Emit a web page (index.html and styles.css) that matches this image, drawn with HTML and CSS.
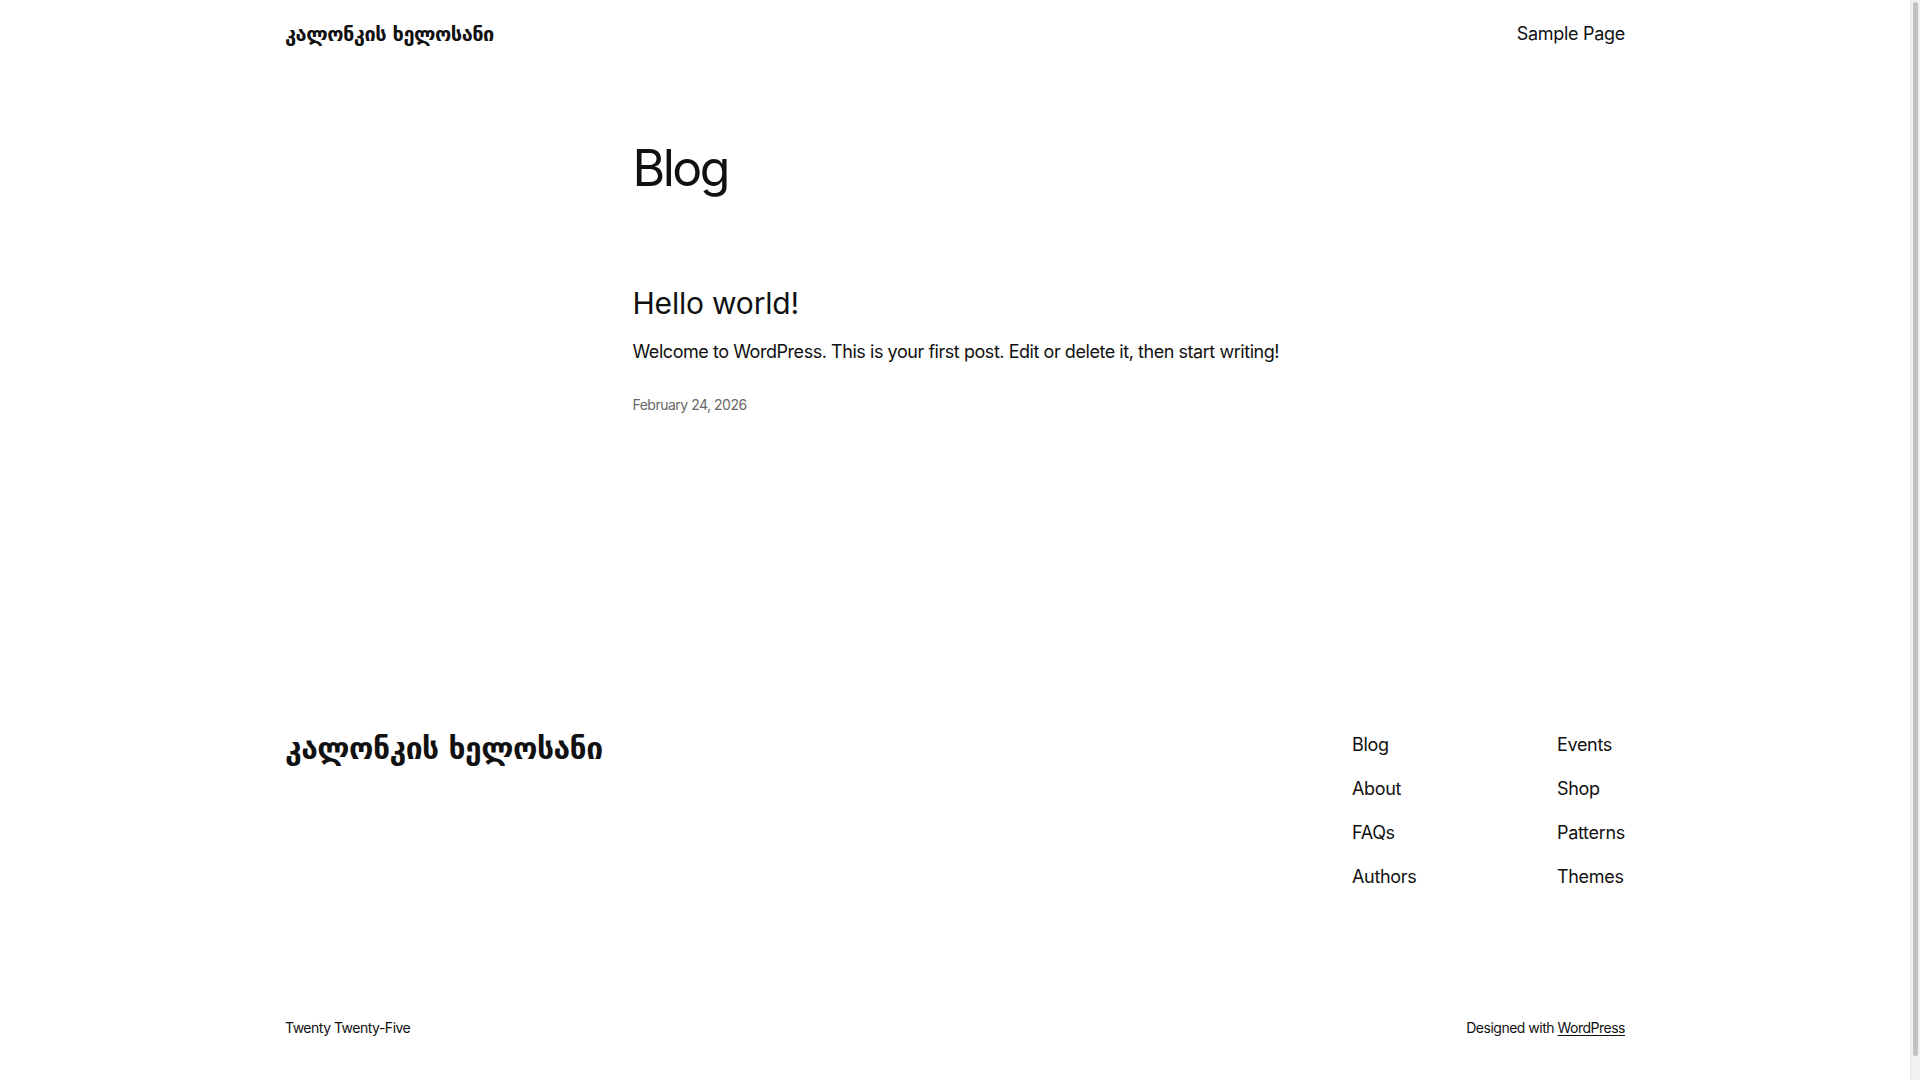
FILE: index.html
```html
<!DOCTYPE html>
<html lang="ka">
<head>
  <meta charset="UTF-8">
  <meta name="viewport" content="width=device-width, initial-scale=1.0">
  <title>Blog – კალონკის ხელოსანი</title>
  <link rel="stylesheet" href="styles.css">
</head>
<body>
  <header class="site-header">
    <div class="wrap header-row">
      <a class="site-title" href="#">კალონკის ხელოსანი</a>
      <nav class="header-nav">
        <a href="#">Sample Page</a>
      </nav>
    </div>
  </header>

  <main class="content">
    <h1 class="page-title">Blog</h1>
    <article class="post">
      <h2 class="post-title"><a href="#">Hello world!</a></h2>
      <p class="post-excerpt">Welcome to WordPress. This is your first post. Edit or delete it, then start writing!</p>
      <time class="post-date" datetime="2026-02-24">February 24, 2026</time>
    </article>
  </main>

  <footer class="site-footer">
    <div class="wrap footer-top">
      <a class="footer-title" href="#">კალონკის ხელოსანი</a>
      <nav class="footer-nav">
        <ul>
          <li><a href="#">Blog</a></li>
          <li><a href="#">About</a></li>
          <li><a href="#">FAQs</a></li>
          <li><a href="#">Authors</a></li>
        </ul>
        <ul>
          <li><a href="#">Events</a></li>
          <li><a href="#">Shop</a></li>
          <li><a href="#">Patterns</a></li>
          <li><a href="#">Themes</a></li>
        </ul>
      </nav>
    </div>
    <div class="wrap footer-bottom">
      <p>Twenty Twenty-Five</p>
      <p>Designed with <a href="#" class="underline">WordPress</a></p>
    </div>
  </footer>

  <div class="scrollbar"><span class="scrollbar-thumb"></span></div>
</body>
</html>
```

FILE: styles.css
```css
* {
  margin: 0;
  padding: 0;
  box-sizing: border-box;
}
body {
  font-family: Inter, "DejaVu Sans", sans-serif;
  font-size: 18px;
  line-height: 1.6;
  color: #111111;
  background: #ffffff;
  margin-right: 10px;
  padding-bottom: 30px;
}
a {
  color: inherit;
  text-decoration: none;
}
ul {
  list-style: none;
}
.wrap {
  max-width: 1340px;
  margin: 0 auto;
}

/* Header */
.header-row {
  display: flex;
  justify-content: space-between;
  align-items: center;
  height: 68px;
}
.site-title {
  font-family: "DejaVu Sans", sans-serif;
  font-weight: 700;
  font-size: 20px;
  letter-spacing: -0.5px;
}
.header-nav a {
  font-size: 18px;
  letter-spacing: -0.3px;
}

/* Main */
.content {
  width: 645px;
  margin: 0 auto;
  padding-top: 70px;
  min-height: 600px;
}
.page-title {
  font-size: 50px;
  font-weight: 400;
  line-height: 1.2;
  letter-spacing: -2.5px;
}
.post {
  margin-top: 87px;
}
.post-title {
  font-size: 30px;
  font-weight: 400;
  line-height: 1.2;
  letter-spacing: -0.2px;
}
.post-excerpt {
  margin-top: 17px;
  letter-spacing: -0.45px;
  white-space: nowrap;
}
.post-date {
  display: block;
  margin-top: 27px;
  font-size: 14px;
  line-height: 1.5;
  letter-spacing: -0.5px;
  color: #686868;
}

/* Footer */
.footer-top {
  display: flex;
  justify-content: space-between;
  align-items: flex-start;
  padding-top: 63px;
}
.footer-title {
  font-family: "DejaVu Sans", sans-serif;
  font-weight: 700;
  font-size: 30px;
  line-height: 1.2;
  letter-spacing: -0.5px;
}
.footer-nav {
  display: grid;
  grid-template-columns: 205px auto;
}
.footer-nav ul {
  display: flex;
  flex-direction: column;
  gap: 16px;
}
.footer-nav li {
  line-height: 28px;
  letter-spacing: -0.3px;
}
.footer-bottom {
  display: flex;
  justify-content: space-between;
  margin-top: 126px;
  font-size: 14px;
  line-height: 1.5;
  letter-spacing: -0.5px;
}
.underline {
  text-decoration: underline;
  text-underline-offset: 2px;
}

/* window scrollbar, as the browser draws it */
.scrollbar {
  position: fixed;
  top: 0;
  right: 0;
  width: 10px;
  height: 100%;
  background: #f1f1f1;
  border-left: 1px solid #e6e6e6;
  padding: 2px 2px;
}
.scrollbar-thumb {
  display: block;
  height: 98%;
  background: #c1c1c1;
  border-radius: 4px;
}
```
